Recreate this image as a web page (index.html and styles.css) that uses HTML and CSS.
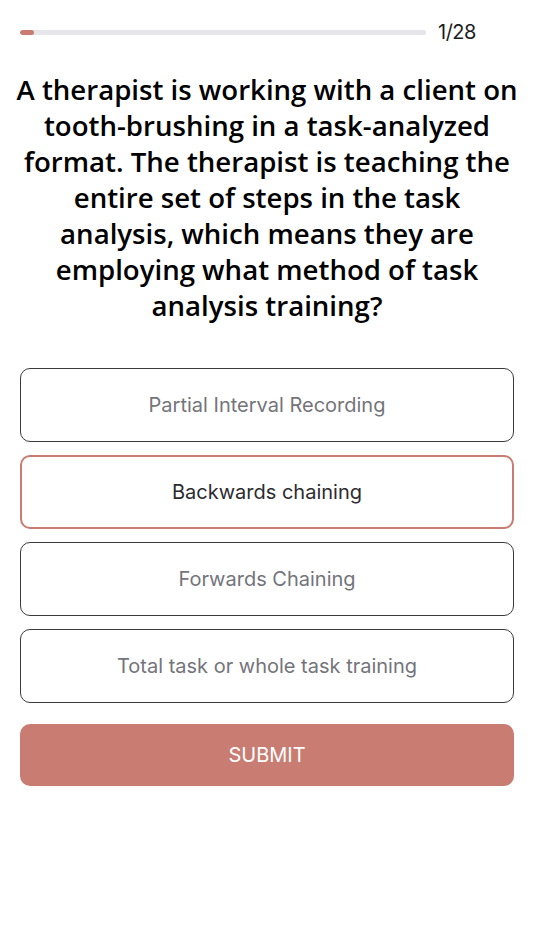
FILE: index.html
```html
<!DOCTYPE html>
<html>
<head>
<meta charset="utf-8">
<link rel="stylesheet" href="styles.css">
</head>
<body>
<div class="page">
  <div class="header">
    <div class="track"><div class="fill" style="width:3.5%"></div></div>
    <div class="count">1/28</div>
  </div>
  <div class="question">A therapist is working with a client on tooth-brushing in a task-analyzed format. The therapist is teaching the entire set of steps in the task analysis, which means they are employing what method of task analysis training?</div>
  <div class="options">
    <div class="option">Partial Interval Recording</div>
    <div class="option selected">Backwards chaining</div>
    <div class="option">Forwards Chaining</div>
    <div class="option">Total task or whole task training</div>
  </div>
  <div class="submit">SUBMIT</div>
</div>
</body>
</html>
```
FILE: styles.css
```css
html, body {
  margin: 0;
  padding: 0;
  background: #ffffff;
}
.page {
  padding: 20px 20px 0 20px;
  font-family: "Liberation Sans", Arial, sans-serif;
}
.header {
  display: flex;
  align-items: center;
  height: 24px;
}
.track {
  width: 406px;
  height: 5px;
  border-radius: 3px;
  background: #e6e6ea;
  overflow: hidden;
}
.fill {
  height: 100%;
  background: #c97d72;
  border-radius: 3px;
}
.count {
  margin-left: 12px;
  font-size: 20px;
  color: #1c1c1e;
  font-family: "Inter", "Liberation Sans", sans-serif;
  letter-spacing: -0.5px;
}
.question {
  margin: 27px -6px 0 -6px;
  font-family: "Open Sans", sans-serif;
  font-weight: 600;
  font-size: 27.6px;
  line-height: 36px;
  text-align: center;
  color: #000;
}
.options {
  margin-top: 45px;
  display: flex;
  flex-direction: column;
  gap: 13px;
}
.option {
  height: 74px;
  box-sizing: border-box;
  border: 1px solid #3a3a3e;
  border-radius: 10px;
  display: flex;
  align-items: center;
  justify-content: center;
  font-family: "Inter", "Liberation Sans", sans-serif;
  font-size: 20px;
  color: #74747b;
}
.option.selected {
  border: 2px solid #c97d72;
  color: #2c2c30;
}
.submit {
  margin-top: 21px;
  height: 62px;
  border-radius: 10px;
  background: #c97d72;
  color: #fff;
  display: flex;
  align-items: center;
  justify-content: center;
  font-family: "Inter", "Liberation Sans", sans-serif;
  font-size: 20px;
}
```
